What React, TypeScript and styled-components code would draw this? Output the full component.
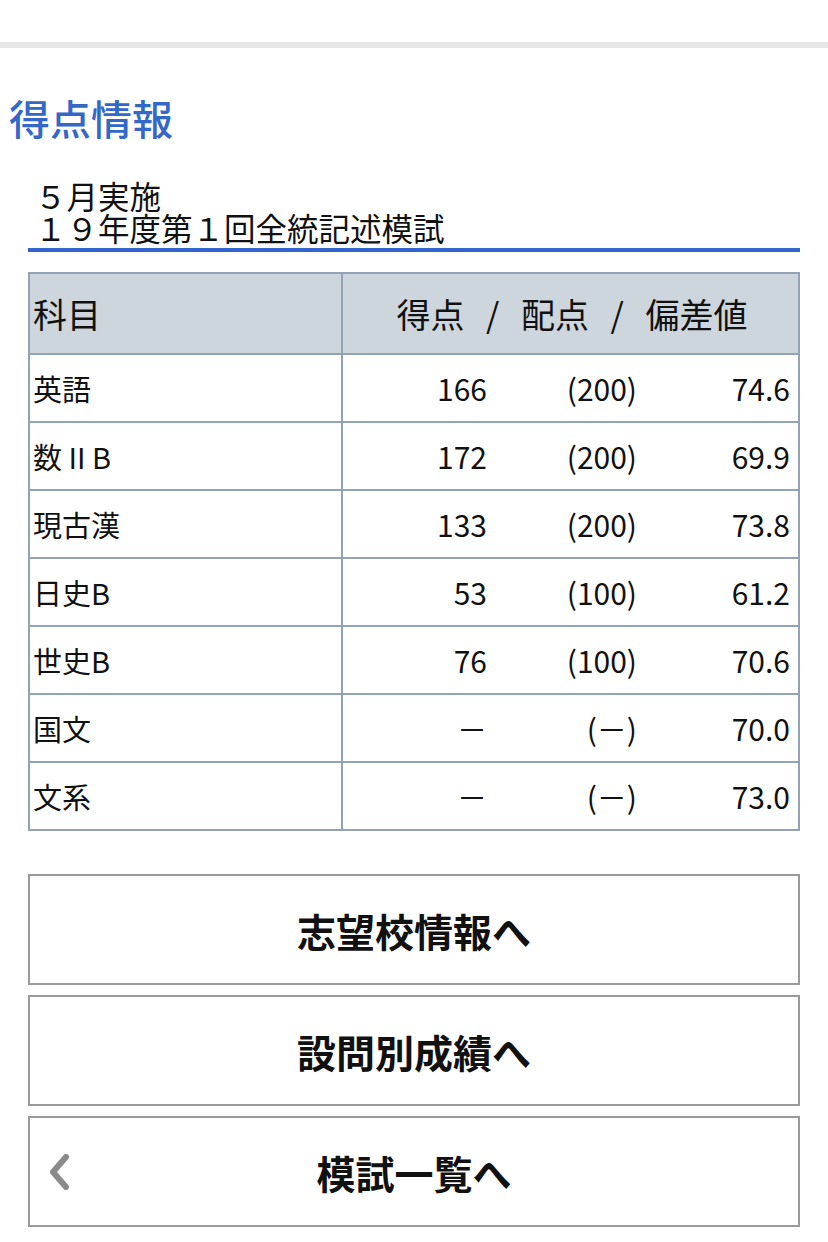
import React from "react";
import styled, { createGlobalStyle } from "styled-components";

const GlobalStyle = createGlobalStyle`
  html, body {
    margin: 0;
    padding: 0;
    background: #ffffff;
  }
  body {
    font-family: "Noto Sans CJK JP", "Noto Sans", sans-serif;
    color: #111111;
  }
`;

const Page = styled.div`
  width: 828px;
  min-height: 1242px;
  background: #ffffff;
  padding-top: 42px;
  box-sizing: border-box;
`;

const TopRule = styled.div`
  height: 6px;
  background: #e6e6e6;
`;

const Heading = styled.h1`
  margin: 42px 0 0 0;
  padding-left: 9px;
  font-size: 41px;
  line-height: 54px;
  font-weight: 500;
  color: #3368c9;
`;

const ExamTitle = styled.div`
  margin: 35px 28px 0 28px;
  padding: 0 0 5px 7px;
  border-bottom: 4px solid #3366cc;
  color: #111111;
`;

const TitleLine = styled.div`
  font-size: 31.5px;
  line-height: 32px;
  height: 32px;
  font-weight: 400;
  white-space: nowrap;
`;

const Table = styled.table`
  margin: 20px 28px 0 28px;
  width: 772px;
  border-collapse: collapse;
  table-layout: fixed;
`;

const HeadCell = styled.th<{ $center?: boolean }>`
  height: 79px;
  padding: 0 0 0 3px;
  background: #cdd5dd;
  border: 2px solid #91a3b4;
  font-size: 34px;
  font-weight: 400;
  text-align: ${(p) => (p.$center ? "center" : "left")};
  word-spacing: ${(p) => (p.$center ? "14px" : "0")};
  white-space: pre;
  color: #111111;
`;

const SubjectCell = styled.td`
  height: 66px;
  padding: 0 0 0 3px;
  border: 2px solid #91a3b4;
  font-size: 29px;
  line-height: 1;
  color: #111111;
  white-space: pre;
`;

const ValueCell = styled.td`
  padding: 0 8px 0 0;
  border: 2px solid #91a3b4;
`;

const Values = styled.div`
  display: grid;
  grid-template-columns: 1fr 150px 153px;
  font-size: 30px;
  line-height: 1;
  color: #111111;
  text-align: right;
`;

const Buttons = styled.div`
  display: flex;
  flex-direction: column;
  gap: 10px;
  margin: 43px 28px 0 28px;
`;

const NavButton = styled.button`
  position: relative;
  box-sizing: border-box;
  height: 111px;
  width: 772px;
  border: 2px solid #9a9a9a;
  background: #ffffff;
  font-family: "Noto Sans CJK JP", "Noto Sans", sans-serif;
  font-size: 39px;
  font-weight: 700;
  color: #111111;
  display: flex;
  align-items: center;
  justify-content: center;
  padding: 0;
  cursor: pointer;
`;

const BackChevron = styled.svg`
  position: absolute;
  left: 17px;
  top: 50%;
  transform: translateY(-50%);
  width: 24px;
  height: 38px;
`;

type Row = { subject: string; score: string; full: string; dev: string };

const rows: Row[] = [
  { subject: "英語", score: "166", full: "(200)", dev: "74.6" },
  { subject: "数 II B", score: "172", full: "(200)", dev: "69.9" },
  { subject: "現古漢", score: "133", full: "(200)", dev: "73.8" },
  { subject: "日史B", score: "53", full: "(100)", dev: "61.2" },
  { subject: "世史B", score: "76", full: "(100)", dev: "70.6" },
  { subject: "国文", score: "－", full: "(－)", dev: "70.0" },
  { subject: "文系", score: "－", full: "(－)", dev: "73.0" },
];

export default function App() {
  return (
    <Page>
      <GlobalStyle />
      <TopRule />
      <Heading>得点情報</Heading>
      <ExamTitle>
        <TitleLine>５月実施</TitleLine>
        <TitleLine>１９年度第１回全統記述模試</TitleLine>
      </ExamTitle>
      <Table>
        <colgroup>
          <col style={{ width: "313px" }} />
          <col />
        </colgroup>
        <thead>
          <tr>
            <HeadCell>科目</HeadCell>
            <HeadCell $center>{"得点 / 配点 / 偏差値"}</HeadCell>
          </tr>
        </thead>
        <tbody>
          {rows.map((r) => (
            <tr key={r.subject}>
              <SubjectCell>{r.subject}</SubjectCell>
              <ValueCell>
                <Values>
                  <span>{r.score}</span>
                  <span>{r.full}</span>
                  <span>{r.dev}</span>
                </Values>
              </ValueCell>
            </tr>
          ))}
        </tbody>
      </Table>
      <Buttons>
        <NavButton>志望校情報へ</NavButton>
        <NavButton>設問別成績へ</NavButton>
        <NavButton>
          <BackChevron viewBox="0 0 24 38">
            <polyline
              points="19,4 6,19 19,34"
              fill="none"
              stroke="#8a8a8a"
              strokeWidth="6"
              strokeLinecap="round"
              strokeLinejoin="round"
            />
          </BackChevron>
          模試一覧へ
        </NavButton>
      </Buttons>
    </Page>
  );
}
